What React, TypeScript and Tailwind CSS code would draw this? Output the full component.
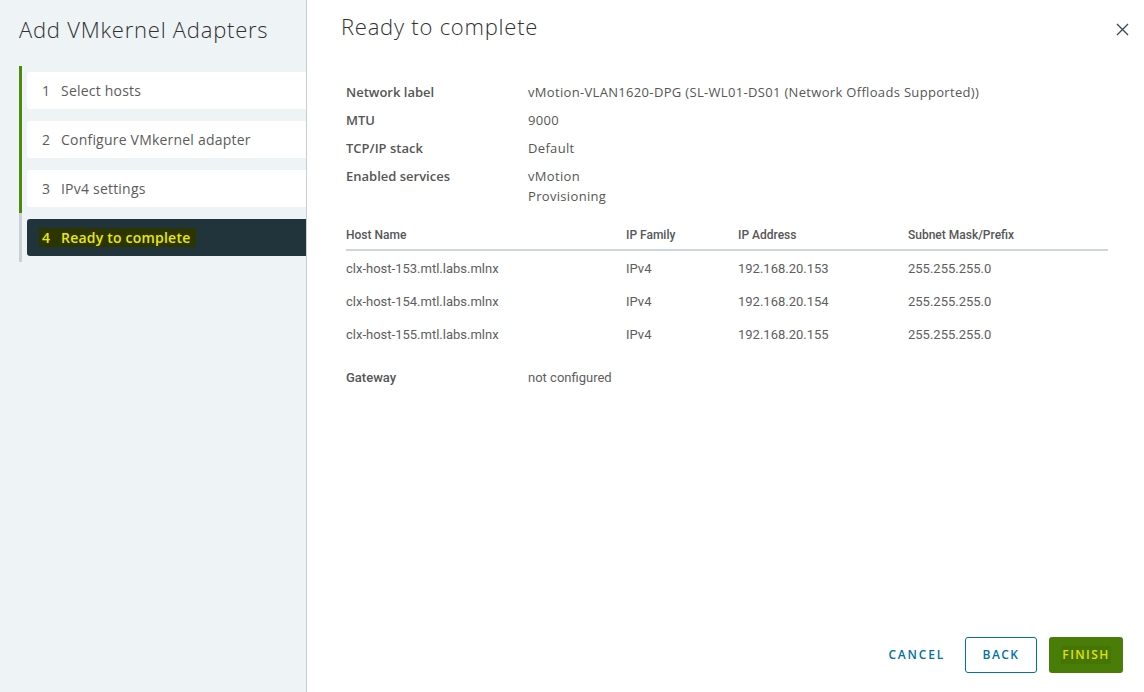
import React from "react";

const steps = [
  { n: 1, label: "Select hosts" },
  { n: 2, label: "Configure VMkernel adapter" },
  { n: 3, label: "IPv4 settings" },
];

const hosts = [
  { name: "clx-host-153.mtl.labs.mlnx", ip: "192.168.20.153" },
  { name: "clx-host-154.mtl.labs.mlnx", ip: "192.168.20.154" },
  { name: "clx-host-155.mtl.labs.mlnx", ip: "192.168.20.155" },
];

const sans = "font-['Open_Sans','Noto_Sans',sans-serif]";

export default function App() {
  return (
    <div className={`flex h-[692px] w-[1144px] overflow-hidden bg-white ${sans}`}>
      {/* wizard nav */}
      <div className="flex w-[307px] shrink-0 flex-col border-r border-[#c5cfd5] bg-[#eef3f6] pl-[19px]">
        <h1 className="mt-[14px] text-[22px] font-light leading-[30px] tracking-[0.035em] text-[#313131]">
          Add VMkernel Adapters
        </h1>
        <div className="mt-[22px] flex">
          <div className="flex w-[3px] flex-col">
            <div className="h-[147px] bg-[#4b8a0b]" />
            <div className="h-[49px] bg-[#c9d1d6]" />
          </div>
          <div className="ml-[5px] flex flex-1 flex-col gap-[12px] pt-[6px]">
            {steps.map((s) => (
              <div
                key={s.n}
                className="flex h-[37px] items-center rounded-l-[3px] bg-white pl-[15px] text-[14px] tracking-[0.015em] text-[#5c5c5c]"
              >
                <span className="w-[19px]">{s.n}</span>
                <span>{s.label}</span>
              </div>
            ))}
            <div className="flex h-[37px] items-center rounded-l-[3px] bg-[#21333b] pl-[12px] text-[14px] font-semibold tracking-[0.015em] text-[#eaea00]">
              <span className="flex h-[19px] items-center bg-[#2c3400] pl-[3px] pr-[6px]">
                <span className="w-[19px]">4</span>
                <span>Ready to complete</span>
              </span>
            </div>
          </div>
        </div>
      </div>

      {/* content */}
      <div className="flex flex-1 flex-col pl-[34px] pr-[36px]">
        <div className="flex items-start justify-between">
          <h2 className="mt-[11px] text-[22px] font-light leading-[30px] tracking-[0.035em] text-[#313131]">
            Ready to complete
          </h2>
          <button className="mr-[-21px] mt-[23px] text-[#3a4d58]">
            <svg width="13" height="13" viewBox="0 0 13 13" fill="none" stroke="currentColor" strokeWidth="1.4">
              <path d="M1 1L12 12M12 1L1 12" />
            </svg>
          </button>
        </div>

        <div className="ml-[5px] mt-[41px] grid grid-cols-[182px_1fr] gap-y-[8px] text-[13px] leading-[20px] text-[#565656]">
          <div className="font-semibold">Network label</div>
          <div className="tracking-[0.025em]">vMotion-VLAN1620-DPG (SL-WL01-DS01 (Network Offloads Supported))</div>
          <div className="font-semibold">MTU</div>
          <div className="tracking-[0.025em]">9000</div>
          <div className="font-semibold">TCP/IP stack</div>
          <div className="tracking-[0.025em]">Default</div>
          <div className="font-semibold">Enabled services</div>
          <div className="tracking-[0.025em]">
            <div>vMotion</div>
            <div>Provisioning</div>
          </div>
        </div>

        <div className="ml-[5px] mt-[21px] font-['Roboto',sans-serif] text-[#5e5e5e]">
          <div className="grid grid-cols-[280px_112px_170px_1fr] border-b-2 border-[#cdd6dc] pb-[6px] text-[12px] font-medium leading-[16px] text-[#565656]">
            <div>Host Name</div>
            <div>IP Family</div>
            <div>IP Address</div>
            <div>Subnet Mask/Prefix</div>
          </div>
          <div className="mt-[1px]">
            {hosts.map((h) => (
              <div key={h.name} className="grid h-[33px] grid-cols-[280px_112px_170px_1fr] items-center text-[13px]">
                <div>{h.name}</div>
                <div>IPv4</div>
                <div>{h.ip}</div>
                <div>255.255.255.0</div>
              </div>
            ))}
          </div>
          <div className="mt-[17px] grid grid-cols-[182px_1fr] text-[13px] leading-[20px]">
            <div className="font-medium text-[#565656]">Gateway</div>
            <div>not configured</div>
          </div>
        </div>

        <div className="mb-[19px] mr-[-15px] mt-auto flex items-center justify-end gap-[12px]">
          <button className="h-[36px] pl-[12px] pr-[8px] text-[12px] font-semibold tracking-[0.15em] text-[#0072a3]">
            CANCEL
          </button>
          <button className="h-[36px] w-[72px] rounded-[3px] border border-[#0072a3] text-[12px] font-semibold tracking-[0.12em] text-[#0072a3]">
            BACK
          </button>
          <button className="flex h-[36px] w-[74px] items-center justify-center rounded-[3px] bg-[#4a7d08] text-[12px] font-semibold tracking-[0.12em] text-[#e2e200]">
            <span className="bg-[#457605] px-[1px]">FINISH</span>
          </button>
        </div>
      </div>
    </div>
  );
}
